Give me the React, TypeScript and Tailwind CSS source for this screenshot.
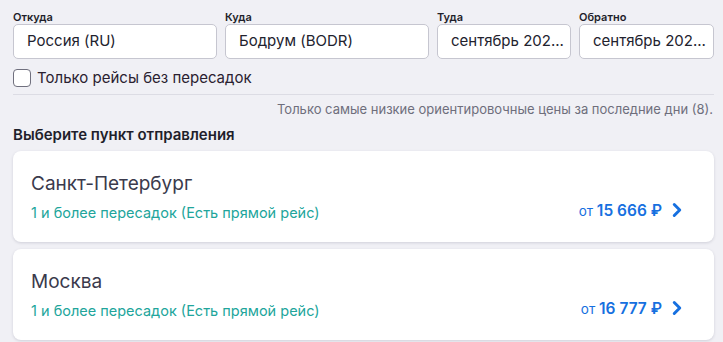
import { ChevronRight } from 'lucide-react';

const fields = [
  { label: 'Откуда', value: 'Россия (RU)', width: 'w-[204px]' },
  { label: 'Куда', value: 'Бодрум (BODR)', width: 'w-[204px]' },
  { label: 'Туда', value: 'сентябрь 202...', width: 'w-[134px]' },
  { label: 'Обратно', value: 'сентябрь 202...', width: 'w-[135px]' },
];

const origins = [
  { city: 'Санкт-Петербург', price: '15 666 ₽' },
  { city: 'Москва', price: '16 777 ₽' },
];

export default function App() {
  return (
    <div className="min-h-[342px] w-[723px] overflow-hidden bg-[#f0f0f5] pl-[13px] pr-[9px] pt-[10px] font-['Inter',sans-serif] text-[#22222e]">
      {/* Search fields */}
      <div className="flex gap-2">
        {fields.map((f) => (
          <div key={f.label} className={`${f.width} shrink-0`}>
            <div className="h-[14px] text-[11px] font-semibold leading-[14px] text-[#1f1f2b]">
              {f.label}
            </div>
            <div className="flex h-[35px] items-center rounded-[5px] border border-[#c6c6d0] bg-white pl-[13px] pr-[2px] text-[15px] text-[#22222e]">
              <span className="whitespace-nowrap">{f.value}</span>
            </div>
          </div>
        ))}
      </div>

      <label className="mt-[10px] flex items-center gap-[6px]">
        <span className="h-[18px] w-[18px] rounded-[4px] border border-[#70707e] bg-white" />
        <span className="text-[15px] leading-[18px] text-[#2a2130]">Только рейсы без пересадок</span>
      </label>

      <div className="mt-[7px] border-t border-[#dcdce4]" />

      <p className="mt-[6px] pr-[1px] text-right text-[13px] leading-[16px] text-[#6e6e7c]">
        Только самые низкие ориентировочные цены за последние дни (8).
      </p>

      <h2 className="mt-[9px] text-[15px] font-semibold leading-[18px] text-[#1f1f2b]">
        Выберите пункт отправления
      </h2>

      {/* Origin cards */}
      <div className="mt-[7px] flex flex-col gap-[7px]">
        {origins.map((o) => (
          <div
            key={o.city}
            className="flex h-[91px] items-end justify-between rounded-[8px] bg-white pb-[20px] pl-[18px] pr-[26px] shadow-[0_1px_3px_rgba(30,30,60,0.15)]"
          >
            <div>
              <div className="text-[19px] leading-[24px] text-[#3a3a4c]">{o.city}</div>
              <div className="mt-[8px] text-[14.5px] leading-[18px] text-[#21a59b]">
                1 и более пересадок (Есть прямой рейс)
              </div>
            </div>
            <div className="flex items-center gap-[4px] text-[#1670e0]">
              <span className="text-[13.5px]">
                от <span className="text-[15.5px] font-semibold">{o.price}</span>
              </span>
              <ChevronRight size={22} strokeWidth={3.2} />
            </div>
          </div>
        ))}
      </div>
    </div>
  );
}
